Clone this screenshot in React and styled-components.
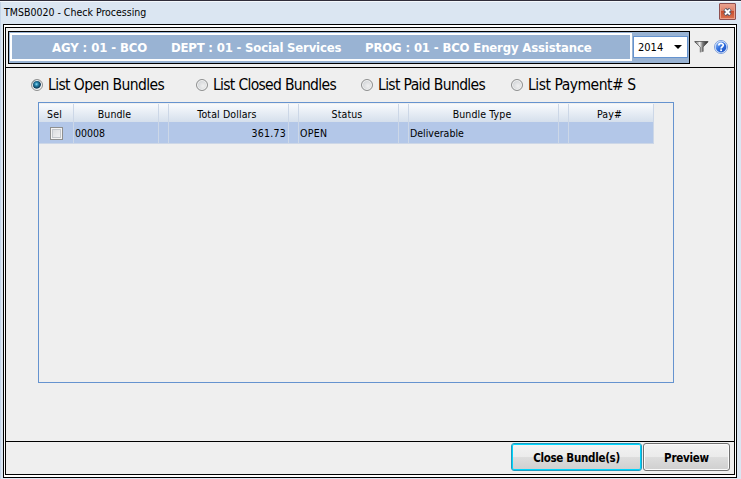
import React from "react";
import styled, { createGlobalStyle, css } from "styled-components";

const GlobalStyle = createGlobalStyle`
  * { box-sizing: border-box; }
  body { margin: 0; overflow: hidden; }
`;

const Window = styled.div`
  width: 741px;
  height: 479px;
  display: flex;
  flex-direction: column;
  padding: 0 4px 1px 3px;
  background: #dbe6f2;
  border-top: 1px solid #2f2d3a;
  box-shadow: inset 0 1px #f4f8fc, inset 1px 0 #c4d5e9;
  font-family: "DejaVu Sans Condensed", "DejaVu Sans", Tahoma, sans-serif;
  font-stretch: condensed;
  font-size: 10.5px;
  color: #000;
  white-space: nowrap;
`;

const TitleBar = styled.header`
  height: 23px;
  flex: none;
  display: flex;
  justify-content: space-between;
  align-items: flex-start;
  padding: 3px 1px 0 1px;
`;

const Title = styled.span`
  line-height: 16px;
`;

const CloseButton = styled.button`
  width: 17px;
  height: 17px;
  margin-top: -1px;
  padding: 0;
  display: grid;
  place-items: center;
  border: 1px solid #8e5050;
  border-radius: 1px;
  background: linear-gradient(#eba493 0, #dd8168 45%, #c64f30 50%, #dd7450 100%);
  box-shadow: inset 0 0 0 1px #e9a08a;
`;

const OuterFrame = styled.main`
  flex: 1;
  min-height: 0;
  border: 1px solid #000;
  padding: 2px 1px;
  background: #fff;
`;

const InnerFrame = styled.div`
  height: 100%;
  display: flex;
  flex-direction: column;
  border: 1px solid #000;
  background: #efefef;
`;

const TopBar = styled.section`
  height: 40px;
  flex: none;
  display: flex;
  align-items: flex-start;
  padding: 3px 0 0 2px;
  border-bottom: 1px solid #000;
`;

const Banner = styled.div`
  width: 682px;
  height: 33px;
  display: flex;
  padding: 1px;
  border: 1px solid #000;
  background: #99b3d3;
`;

const Hierarchy = styled.div`
  width: 622px;
  height: 28px;
  display: flex;
  padding-left: 40px;
  border: 2px solid #fff;
  color: #fff;
  font-size: 13px;
  font-weight: bold;
  line-height: 25px;
`;

const HierarchyItem = styled.span`
  width: ${(p) => p.$width}px;
  letter-spacing: ${(p) => p.$spacing}px;
`;

const YearSelect = styled.div`
  width: 55px;
  height: 22px;
  margin: 3px 0 0 1px;
  display: flex;
  align-items: center;
  justify-content: space-between;
  padding: 0 5px 0 4px;
  border: 1px solid #6593cf;
  background: #fff;
  font-size: 11px;
`;

const Arrow = styled.svg`
  width: 8px;
  height: 4px;
`;

const Tools = styled.div`
  display: flex;
  gap: 5px;
  padding: 9px 0 0 4px;
`;

const RadioRow = styled.section`
  height: 34px;
  flex: none;
  display: flex;
  padding: 7px 0 0 25px;
`;

const RadioOption = styled.label`
  width: ${(p) => p.$width}px;
  height: 20px;
  display: flex;
  align-items: center;
  gap: 5px;
  font-size: 15.5px;
  letter-spacing: ${(p) => p.$spacing}px;
`;

const RadioDot = styled.span`
  width: 12px;
  height: 12px;
  flex: none;
  border: 1px solid #8e8f8f;
  border-radius: 50%;
  box-shadow: inset 0 0 0 1px #f4f4f4;
  background: radial-gradient(circle at 60% 60%, #f0f0f0, #c4c8cc);
  ${(p) =>
    p.$checked &&
    css`
      background: radial-gradient(circle at 45% 42%, #8fdcf5 0, #2583ab 22%, #0e3956 50%, #eef1f3 62%);
    `}
`;

const Grid = styled.section`
  width: 636px;
  height: 281px;
  flex: none;
  margin: 0 0 0 32px;
  padding-top: 1px;
  border: 1px solid #6593cf;
`;

const GridRow = styled.div`
  display: grid;
  width: 615px;
  grid-template-columns: 35px 85px 10px 120px 10px 100px 10px 150px 10px 85px;
  height: ${(p) => (p.$header ? 18 : 22)}px;
  background: ${(p) => (p.$header ? "linear-gradient(#f8fafd, #d5dfec)" : "#b3c7e8")};
  border-bottom: ${(p) => (p.$header ? "none" : "1px solid #cdd7e7")};
  letter-spacing: ${(p) => (p.$header ? 0.12 : 0)}px;
`;

const Cell = styled.div`
  display: flex;
  align-items: center;
  justify-content: ${(p) => p.$align || "center"};
  padding: ${(p) => (p.$align ? "0 2px 0 1px" : "1px 3px 0 0")};
  border-right: 1px solid #ccd7e7;
  overflow: hidden;
  ${(p) => p.$spacing && css`letter-spacing: ${p.$spacing}px;`}
`;

const CheckBox = styled.span`
  width: 13px;
  height: 13px;
  border: 1px solid #8e8f8f;
  box-shadow: inset 0 0 0 1px #f4f4f4, inset 0 0 0 2px #c3c7cc;
  background: linear-gradient(135deg, #d5d8dc, #f6f6f6);
  margin-left: 4px;
`;

const Footer = styled.footer`
  height: 33px;
  margin-top: auto;
  display: flex;
  justify-content: flex-end;
  gap: 1px;
  padding: 1px 4px 0 0;
  border-top: 1px solid #000;
`;

const Button = styled.button`
  width: ${(p) => p.$width}px;
  height: 28px;
  padding: 2px 0 0 0;
  border: 1px solid ${(p) => (p.$primary ? "#1b9cc0" : "#707070")};
  border-radius: 3px;
  box-shadow: inset 0 0 0 1px ${(p) => (p.$primary ? "#00d4fb" : "#fbfbfb")};
  background: linear-gradient(#f3f3f3 0, #ebebeb 49%, #dddddd 51%, #cfcfcf 100%);
  font: bold condensed 11.5px "DejaVu Sans Condensed", "DejaVu Sans", Tahoma, sans-serif;
  letter-spacing: ${(p) => p.$spacing}px;
  color: #000;
`;

function CloseIcon() {
  return (
    <svg width="9" height="8" viewBox="0 0 9 8">
      <path d="M1.7 1.2 7.3 6.8M7.3 1.2 1.7 6.8" stroke="#4c5568" strokeWidth="3.8" />
      <path d="M2 1.5 7 6.5M7 1.5 2 6.5" stroke="#fff" strokeWidth="2" />
    </svg>
  );
}

function FunnelIcon() {
  return (
    <svg width="15" height="14" viewBox="0 0 15 14">
      <defs>
        <linearGradient id="funnel">
          <stop offset="0" stopColor="#555" />
          <stop offset="0.38" stopColor="#f2f2f2" />
          <stop offset="0.6" stopColor="#777" />
          <stop offset="1" stopColor="#1c1c1c" />
        </linearGradient>
      </defs>
      <path d="M0.5 1H14.2V2L9.3 7V11.6L6 12.8V7L0.5 2Z" fill="url(#funnel)" />
      <path d="M1 1.5H14M1 2 6.3 7.2V12.3M9 11.6V7L13.6 2.2" fill="none" stroke="#5b5b5b" strokeWidth="0.8" />
    </svg>
  );
}

function HelpIcon() {
  return (
    <svg width="14" height="14" viewBox="0 0 14 14">
      <defs>
        <linearGradient id="help" x1="0" y1="0" x2="1" y2="1">
          <stop offset="0" stopColor="#a5c8f8" />
          <stop offset="0.45" stopColor="#3272e0" />
          <stop offset="1" stopColor="#184cc0" />
        </linearGradient>
      </defs>
      <circle cx="7" cy="7" r="6.5" fill="#e8f0ff" stroke="#6f95d8" strokeWidth="0.9" />
      <circle cx="7" cy="7" r="5.4" fill="url(#help)" />
      <path d="M4.8 5.5C4.8 2.8 9.3 2.8 9.3 5.3C9.3 6.8 7.1 6.7 7.1 8.5" fill="none" stroke="#fff" strokeWidth="1.7" />
      <rect x="6.2" y="9.4" width="1.8" height="1.7" fill="#fff" />
    </svg>
  );
}

const hierarchy = [
  { text: "AGY : 01 - BCO", width: 119, spacing: -0.08 },
  { text: "DEPT : 01 - Social Services", width: 194, spacing: -0.19 },
  { text: "PROG : 01 - BCO Energy Assistance", width: 240, spacing: -0.15 },
];

const options = [
  { text: "List Open Bundles", width: 165, spacing: -0.6, checked: true },
  { text: "List Closed Bundles", width: 165, spacing: -0.68 },
  { text: "List Paid Bundles", width: 150, spacing: -0.64 },
  { text: "List Payment# S", width: 140, spacing: -0.48 },
];

const headers = ["Sel", "Bundle", "", "Total Dollars", "", "Status", "", "Bundle Type", "", "Pay#"];

export default function App() {
  return (
    <>
      <GlobalStyle />
      <Window>
        <TitleBar>
          <Title>TMSB0020 - Check Processing</Title>
          <CloseButton aria-label="Close"><CloseIcon /></CloseButton>
        </TitleBar>
        <OuterFrame>
          <InnerFrame>
            <TopBar>
              <Banner>
                <Hierarchy>
                  {hierarchy.map((h) => (
                    <HierarchyItem key={h.text} $width={h.width} $spacing={h.spacing}>{h.text}</HierarchyItem>
                  ))}
                </Hierarchy>
                <YearSelect>
                  <span>2014</span>
                  <Arrow viewBox="0 0 8 4"><path d="M0 0H8L4 4Z" /></Arrow>
                </YearSelect>
              </Banner>
              <Tools><FunnelIcon /><HelpIcon /></Tools>
            </TopBar>
            <RadioRow>
              {options.map((o) => (
                <RadioOption key={o.text} $width={o.width} $spacing={o.spacing}>
                  <RadioDot $checked={o.checked} />
                  <span>{o.text}</span>
                </RadioOption>
              ))}
            </RadioRow>
            <Grid>
              <GridRow $header>
                {headers.map((h, i) => <Cell key={i}>{h}</Cell>)}
              </GridRow>
              <GridRow>
                <Cell><CheckBox /></Cell>
                <Cell $align="flex-start">00008</Cell>
                <Cell />
                <Cell $align="flex-end" $spacing={0.25}>361.73</Cell>
                <Cell />
                <Cell $align="flex-start" $spacing={0.3}>OPEN</Cell>
                <Cell />
                <Cell $align="flex-start">Deliverable</Cell>
                <Cell />
                <Cell />
              </GridRow>
            </Grid>
            <Footer>
              <Button $primary $width={131} $spacing={-0.3}>Close Bundle(s)</Button>
              <Button $width={87} $spacing={-0.25}>Preview</Button>
            </Footer>
          </InnerFrame>
        </OuterFrame>
      </Window>
    </>
  );
}
